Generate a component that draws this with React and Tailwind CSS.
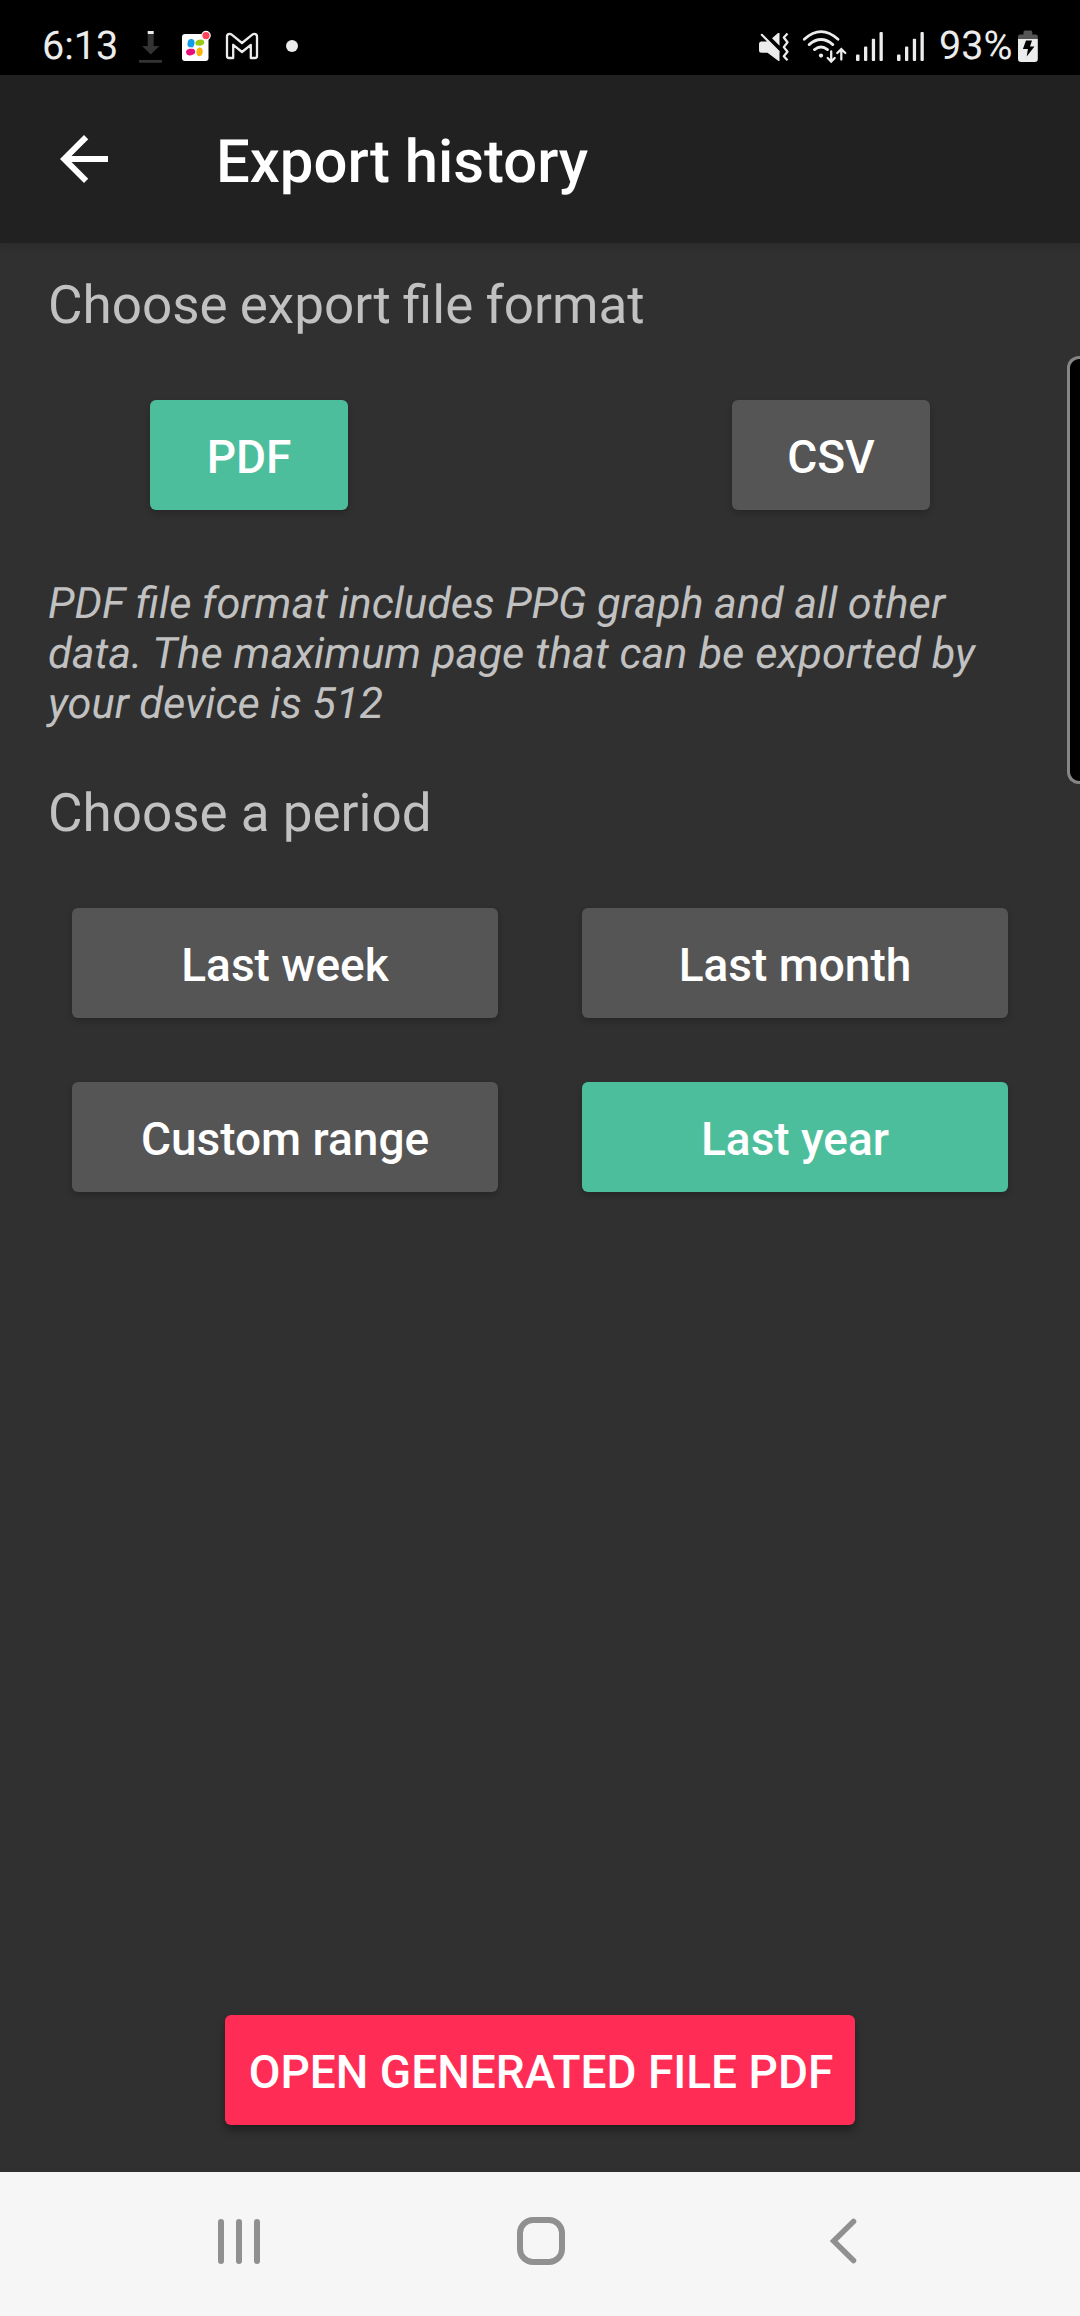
import React from "react";

const INK = "#ececec";

function DownloadIcon() {
  return (
    <svg className="h-10 w-[23px]" viewBox="139 26 23 40">
      <path d="M147.7 34h6v12h5.6l-8.6 8.5-8.6-8.5h5.6zM139 60h23v2.8h-23z" fill="#333333" />
      <path d="M147.7 31h6v3h-6z" fill={INK} />
    </svg>
  );
}

function PetalsIcon() {
  return (
    <svg className="ml-5 h-10 w-[30px]" viewBox="182 26 30 40">
      <rect x="182" y="34" width="26.5" height="27" rx="3" fill="#ffffff" />
      <ellipse cx="191" cy="43.3" rx="3.5" ry="4.3" fill="#0f9fe8" transform="rotate(10 191 43.3)" />
      <ellipse cx="199.8" cy="42.8" rx="4.5" ry="3.1" fill="#9acb12" transform="rotate(-12 199.8 42.8)" />
      <ellipse cx="190.6" cy="52" rx="4.6" ry="3.3" fill="#e5107c" transform="rotate(-12 190.6 52)" />
      <ellipse cx="199.6" cy="51.8" rx="3.1" ry="4.4" fill="#fbb30b" transform="rotate(5 199.6 51.8)" />
      <path d="M190 47.5q5 3 5.500-3M200.500 46.500q-5-2.500-6 3" fill="none" stroke="#ffffff" strokeWidth=".7" />
      <circle cx="206" cy="35.600" r="4.200" fill="#ff4359" stroke="#ffffff" strokeWidth="1.200" />
    </svg>
  );
}

function MailIcon() {
  return (
    <svg className="ml-[13px] h-10 w-[34px]" viewBox="225 26 34 40">
      <path
        d="M227 36.500q0-2.700 2.700-2.700 1 0 2 .8L242 43l10.300-8.400q1-.8 2-.8 2.700 0 2.700 2.700V56q0 2-2 2h-4.200V44.800L242 52l-8.800-7.200V58H229q-2 0-2-2z"
        fill="none"
        stroke={INK}
        strokeWidth="2.300"
        strokeLinejoin="round"
      />
    </svg>
  );
}

function MuteIcon() {
  return (
    <svg className="h-10 w-8" viewBox="758 26 32 40">
      <path d="M759 44q0-2.500 2.500-2.500h4.500l2.500-.500 11 11v9h-1L767.500 52.800H761.500q-2.500 0-2.500-2.500z" fill={INK} />
      <path d="M772 38.200l6-5.200h1.500v12.800z" fill={INK} />
      <path d="M761.800 34.800L778.500 51.500" stroke={INK} strokeWidth="2.200" strokeLinecap="round" />
      <path d="M787.500 33.500l-3.700 4 3.700 4.800-3.700 4.800 3.700 4.600-3.700 4.500 3.700 4" fill="none" stroke={INK} strokeWidth="2.300" strokeLinejoin="round" />
    </svg>
  );
}

function WifiIcon() {
  return (
    <svg className="ml-3 h-10 w-[46px]" viewBox="802 26 46 40" fill="none" stroke={INK} strokeLinecap="round">
      <path d="M804.300 39.300Q821 24 838 39.300M809.200 44.600Q821 34.500 832.800 44.600M814.500 49.600Q821 44.300 827.500 49.600" strokeWidth="2.800" />
      <circle cx="821" cy="55.600" r="2.100" fill={INK} stroke="none" />
      <path d="M831.200 51.500v10M827.700 58l3.500 3.700 3.500-3.700M841.300 59.500v-10M837.300 53l4-3.900 4 3.900" strokeWidth="2.300" />
    </svg>
  );
}

function SignalIcon() {
  return (
    <svg className="h-10 w-[29px]" viewBox="855 26 29 40" fill={INK}>
      <rect x="856" y="54.500" width="3.500" height="6.500" rx="1" />
      <rect x="864" y="46.500" width="3.300" height="14.500" rx="1" />
      <rect x="871.800" y="38.700" width="3.300" height="22.300" rx="1" />
      <rect x="879.500" y="32" width="3.300" height="29" rx="1" />
    </svg>
  );
}

function BatteryIcon() {
  return (
    <svg className="h-10 w-[22px]" viewBox="1017 26 22 40">
      <path d="M1018 39v-2.500q0-2 2-2h3.500V32q0-1.500 1.500-1.500h5.800q1.500 0 1.500 1.500v2.500h3.500q2 0 2 2V39z" fill="#555555" />
      <path d="M1018 39h19.800v20q0 3-3 3H1021q-3 0-3-3z" fill={INK} />
      <path d="M1026 40.500h6l-2 6h4.500l-7.800 10 1.200-7.500h-5z" fill="#000000" />
    </svg>
  );
}

function StatusBar() {
  return (
    <div className="flex h-[75px] shrink-0 items-center bg-black pt-[17px] pr-[41px] pl-[42px] text-[40px] leading-none text-[#ececec]">
      <span className="w-[97px] text-[39.600px]">6:13</span>
      <DownloadIcon />
      <PetalsIcon />
      <MailIcon />
      <span className="ml-[27px] size-3 rounded-full bg-[#ececec]" />
      <div className="ml-auto flex items-center">
        <MuteIcon />
        <WifiIcon />
        <div className="ml-[7px] flex gap-3">
          <SignalIcon />
          <SignalIcon />
        </div>
        <span className="ml-[14px] w-[78px] text-[39.500px]">93%</span>
        <BatteryIcon />
      </div>
    </div>
  );
}

function Header() {
  return (
    <header className="flex h-[168px] shrink-0 items-center bg-[#212121] pl-12 text-white shadow-[0_2px_10px_rgba(0,0,0,0.15)]">
      <svg className="size-[72px]" viewBox="0 0 24 24" fill="currentColor">
        <path d="M20 11H7.830l5.590-5.590L12 4l-8 8 8 8 1.410-1.410L7.830 13H20z" />
      </svg>
      <h1 className="ml-24 pt-[5px] text-[59.800px] leading-[70px] font-medium">Export history</h1>
    </header>
  );
}

const buttonBase =
  "flex h-[110px] items-center justify-center rounded-md pt-1 text-[46px] leading-[54px] font-medium text-white";

function Option({ label, selected, narrow }) {
  return (
    <button
      className={`${buttonBase} shadow-[0_3px_6px_rgba(0,0,0,0.2)] ${narrow ? "w-[198px]" : "w-full"} ${selected ? "bg-[#4dbe9b]" : "bg-[#555555]"}`}
    >
      {label}
    </button>
  );
}

function NavBar() {
  return (
    <nav className="flex h-36 shrink-0 items-center justify-between bg-[#f6f6f6] pr-[220px] pl-[216px] pb-[6px] text-[#909090]">
      <div className="flex w-[46px] justify-center gap-3">
        <span className="h-[45px] w-1.5 rounded-full bg-current" />
        <span className="h-[45px] w-1.5 rounded-full bg-current" />
        <span className="h-[45px] w-1.5 rounded-full bg-current" />
      </div>
      <span className="mr-[11px] size-12 rounded-[16px] border-6 border-current" />
      <svg className="h-[46px] w-[30px]" viewBox="0 0 30 46" fill="none" stroke="currentColor" strokeWidth="5.500" strokeLinecap="round">
        <path d="M23.500 3.500L3.700 23l19.800 19.500" />
      </svg>
    </nav>
  );
}

export default function App() {
  return (
    <div className="relative flex h-[2316px] w-[1080px] flex-col overflow-hidden bg-[#303030] font-[Roboto,sans-serif] [text-rendering:geometricPrecision]">
      <StatusBar />
      <Header />
      <main className="flex flex-1 flex-col pt-[31px] text-[#c1c1c1]">
        <h2 className="px-12 text-[53px] leading-[62px] [word-spacing:-1px]">Choose export file format</h2>
        <div className="mt-16 flex justify-between px-[150px]">
          <Option label="PDF" selected narrow />
          <Option label="CSV" narrow />
        </div>
        <p className="mt-[69px] px-12 text-[43.300px] leading-[50px] italic">
          <span className="[word-spacing:-0.25px]">PDF file format includes PPG graph and all other</span>
          <br />
          <span className="[word-spacing:0.25px]">data. The maximum page that can be exported by</span>
          <br />
          <span className="[word-spacing:-0.3px]">your device is 512</span>
        </p>
        <h2 className="mt-[53px] px-12 text-[53px] leading-[62px]">Choose a period</h2>
        <div className="mt-16 grid grid-cols-2 gap-x-[84px] gap-y-16 px-[72px]">
          <Option label="Last week" />
          <Option label="Last month" />
          <Option label="Custom range" />
          <Option label="Last year" selected />
        </div>
        <button className={`${buttonBase} mx-auto mt-auto mb-[47px] w-[630px] bg-[#ff2d55] pl-0.5 whitespace-nowrap shadow-[0_5px_9px_rgba(0,0,0,0.35)]`}>
          OPEN GENERATED FILE PDF
        </button>
      </main>
      <NavBar />
      {/* Edge panel handle overlapping the right side of the screen */}
      <div className="absolute top-[356px] right-0 h-[428px] w-[13px] rounded-l-[12px] border-y-3 border-l-3 border-[#858585] bg-black" />
    </div>
  );
}
